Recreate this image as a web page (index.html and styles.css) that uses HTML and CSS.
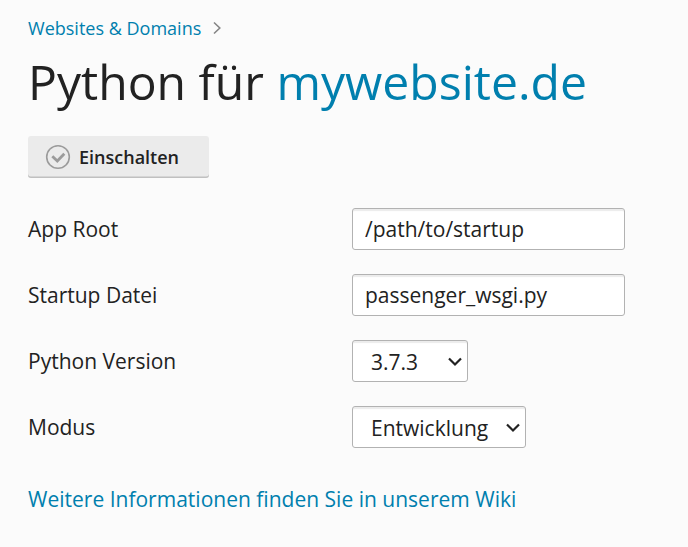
FILE: index.html
```html
<!DOCTYPE html>
<html lang="de">
<head>
<meta charset="utf-8">
<title>Python für mywebsite.de</title>
<link rel="stylesheet" href="styles.css">
</head>
<body>
<nav class="breadcrumb"><a href="#">Websites &amp; Domains</a><svg class="crumb-arrow" width="8" height="14" viewBox="0 0 8 14"><path d="M1 1.5 6.8 7 1 12.5"/></svg></nav>
<h1>Python für <a href="#">mywebsite.de</a></h1>
<button class="enable" type="button"><svg width="26" height="26" viewBox="0 0 26 26"><circle cx="13" cy="13" r="11.3"/><path class="check" d="m7.3 12.3 5 4.7 7-7.2"/></svg><span>Einschalten</span></button>
<form class="settings">
<div class="row"><label for="root">App Root</label><input id="root" type="text" value="/path/to/startup"></div>
<div class="row"><label for="startup">Startup Datei</label><input id="startup" type="text" value="passenger_wsgi.py"></div>
<div class="row"><span class="label">Python Version</span><div class="select version"><span>3.7.3</span><svg width="14" height="10" viewBox="0 0 14 10"><path d="m1 1.5 6 6 6-6"/></svg></div></div>
<div class="row"><span class="label">Modus</span><div class="select mode"><span>Entwicklung</span><svg width="14" height="10" viewBox="0 0 14 10"><path d="m1 1.5 6 6 6-6"/></svg></div></div>
</form>
<a class="wiki" href="#">Weitere Informationen finden Sie in unserem Wiki</a>
</body>
</html>
```
FILE: styles.css
```css
* { box-sizing: border-box; }
body { margin: 0; padding: 16px 28px 0; background: #fbfbfb; color: #222; font: 21px/30px "Open Sans", sans-serif; }
a { color: #007fae; text-decoration: none; }
svg { fill: none; flex: none; }
.breadcrumb { display: flex; align-items: center; gap: 11.5px; height: 24px; font-size: 18.03px; line-height: 24px; }
.crumb-arrow { stroke: #858585; stroke-width: 1.6; }
h1 { margin: 10px 0 0; height: 64px; font-size: 48.1px; line-height: 64px; font-weight: 400; white-space: nowrap; }
.enable { display: flex; align-items: center; gap: 8px; width: 181px; height: 42px; margin: 22px 0 30px; padding: 0 17px; border: 0; border-radius: 3px; background: #ebebeb; box-shadow: inset 0 -1.5px 0 #c0c0c0; color: #222; font: 600 18px/24px "Open Sans", sans-serif; }
.enable svg { stroke: #9b9b9b; stroke-width: 1.6; }
.enable .check { stroke-width: 2.8; }
.settings { display: grid; gap: 24px; margin: 0; }
.row { display: grid; grid-template-columns: 324px max-content; align-items: center; height: 42px; }
input, .select { height: 42px; border: 1px solid #b2b2b2; border-radius: 3px; background: #fff; box-shadow: inset 0 3px 1px -1px #ececec; color: #222; font: 21px/30px "Open Sans", sans-serif; }
input { width: 273px; padding: 0 12px; }
.select { display: flex; align-items: center; justify-content: space-between; padding: 2px 5px 0 18px; }
.select svg { margin-top: -1px; stroke: #222; stroke-width: 2.2; }
.version { width: 116px; }
.mode { width: 174px; }
.wiki { display: block; margin-top: 36px; font-size: 21.03px; }
```
